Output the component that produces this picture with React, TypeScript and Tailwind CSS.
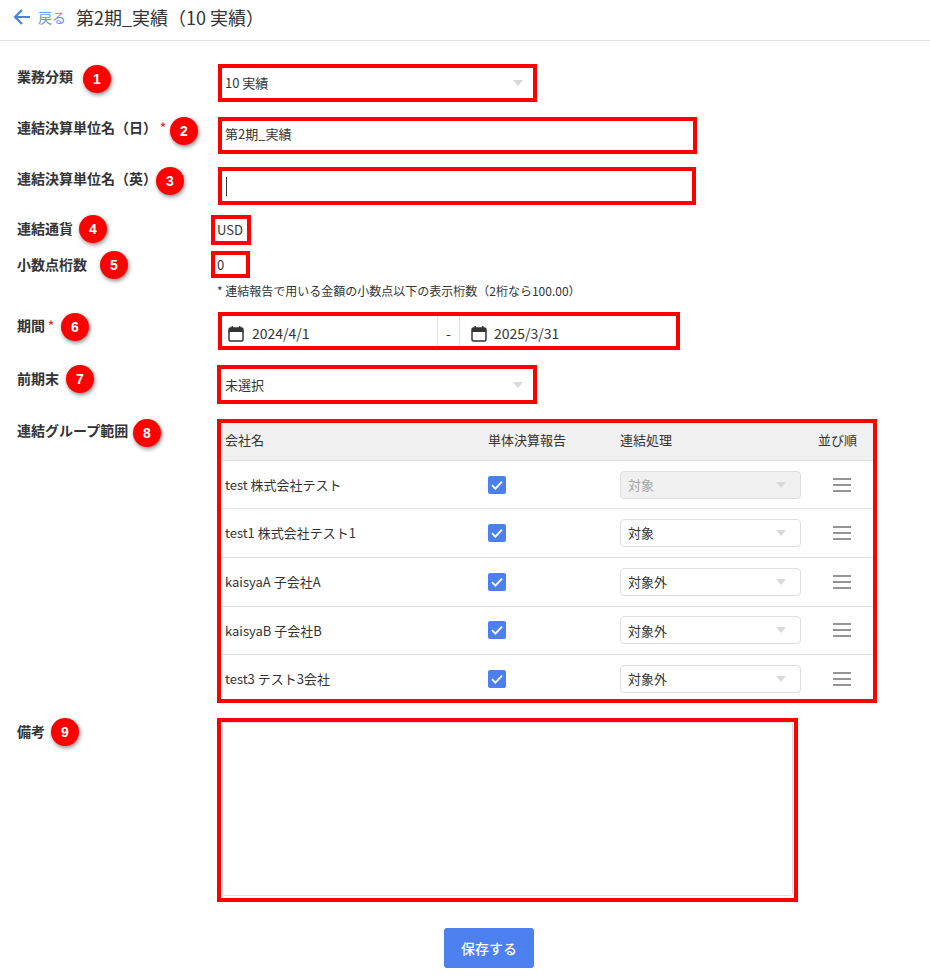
import { ReactNode } from 'react';

const companies = [
  { name: 'test 株式会社テスト', mode: '対象', disabled: true },
  { name: 'test1 株式会社テスト1', mode: '対象', disabled: false },
  { name: 'kaisyaA 子会社A', mode: '対象外', disabled: false },
  { name: 'kaisyaB 子会社B', mode: '対象外', disabled: false },
  { name: 'test3 テスト3会社', mode: '対象外', disabled: false },
];

function Badge({ n, className }: { n: number; className: string }) {
  return (
    <span
      className={`absolute flex h-[28px] w-[28px] items-center justify-center rounded-full bg-[#ff0000] font-['Liberation_Sans',sans-serif] text-[14px] font-bold text-white shadow-[1px_2px_4px_rgba(0,0,0,0.45)] ${className}`}
    >
      {n}
    </span>
  );
}

function Caret() {
  return <span className="h-0 w-0 border-x-[5px] border-t-[6px] border-x-transparent border-t-[#d9d9d9]" />;
}

function CalendarIcon() {
  return (
    <svg width="18" height="18" viewBox="0 0 18 18" className="shrink-0 text-[#333]">
      <path d="M2 4.5a1.5 1.5 0 0 1 1.5-1.5h11A1.5 1.5 0 0 1 16 4.5v10a1.5 1.5 0 0 1-1.5 1.5h-11A1.5 1.5 0 0 1 2 14.5z" fill="none" stroke="currentColor" strokeWidth="1.5" />
      <rect x="2" y="3" width="14" height="4" fill="currentColor" />
      <rect x="4.5" y="1" width="1.6" height="3" fill="currentColor" />
      <rect x="11.9" y="1" width="1.6" height="3" fill="currentColor" />
    </svg>
  );
}

function Row({ label, badge, className, children }: { label: ReactNode; badge: ReactNode; className: string; children: ReactNode }) {
  return (
    <div className={`flex ${className}`}>
      <div className="relative w-[200px] shrink-0 text-[14px] font-bold leading-[20px] text-[#333]">
        {label}
        {badge}
      </div>
      {children}
    </div>
  );
}

function Required() {
  return <span className="ml-[3px] align-top text-[12px] text-[#d9363e]">*</span>;
}

function CompanyRow({ name, mode, disabled }: { name: string; mode: string; disabled: boolean }) {
  return (
    <div className="grid h-[48.6px] grid-cols-[267px_132px_198px_1fr] items-center border-t border-[#e2e2e2]">
      <span className="pl-[4px]">{name}</span>
      <span className="flex h-[18px] w-[18px] items-center justify-center rounded-[2px] bg-[#4c80ee]">
        <svg width="14" height="14" viewBox="0 0 14 14" fill="none" stroke="#fff" strokeWidth="1.8">
          <path d="M2 7.2l3.4 3.4L12 3.6" />
        </svg>
      </span>
      <span
        className={`flex h-[28px] w-[181px] items-center justify-between rounded-[4px] border border-[#dedede] pl-[7px] pr-[14px] ${
          disabled ? 'bg-[#f0f0f0] text-[#a5a5a5]' : 'bg-white'
        }`}
      >
        {mode}
        <Caret />
      </span>
      <span className="flex w-[18px] translate-x-[15px] flex-col gap-[4px]">
        <i className="h-[2px] bg-[#959595]" />
        <i className="h-[2px] bg-[#959595]" />
        <i className="h-[2px] bg-[#959595]" />
      </span>
    </div>
  );
}

export default function App() {
  return (
    <div className="min-h-[977px] bg-white text-[13px] text-[#333] font-['Noto_Sans_CJK_JP','Noto_Sans',sans-serif]">
      {/* Header */}
      <header className="flex h-[41px] items-center border-b border-[#e2e2e2] pb-[6px] pl-[13px]">
        <svg width="18" height="18" viewBox="0 0 18 18" fill="none" stroke="#4c80ee" strokeWidth="2.2">
          <path d="M17 9H2M9 2L2 9l7 7" />
        </svg>
        <span className="ml-[7px] text-[14px] text-[#6d94ea]">戻る</span>
        <h1 className="ml-[10px] text-[18px] font-normal text-[#333]">第2期_実績（10 実績）</h1>
      </header>

      <main className="px-[17px]">
        <Row className="mt-[23px]" label={<span className="relative top-[2px]">業務分類</span>} badge={<Badge n={1} className="left-[66px] top-[1px]" />}>
          <div className="ml-[1px] flex h-[38px] w-[319px] items-center justify-between border-4 border-[#ff0000] pl-[3px] pr-[10px]">
            <span>10 実績</span>
            <Caret />
          </div>
        </Row>

        <Row
          className="mt-[15px]"
          label={<span className="relative">連結決算単位名（日）<Required /></span>}
          badge={<Badge n={2} className="left-[153px] top-0" />}
        >
          <div className="ml-[1px] flex h-[37px] w-[479px] items-center border-4 border-[#ff0000] pb-[4px] pl-[3px]">第2期_実績</div>
        </Row>

        <Row className="mt-[13px]" label={<span className="relative top-[1px]">連結決算単位名（英）</span>} badge={<Badge n={3} className="left-[139px] top-0" />}>
          <div className="ml-[1px] flex h-[38px] w-[478px] items-center border-4 border-[#ff0000] pl-[4px]">
            <span className="h-[19px] w-px bg-[#333]" />
          </div>
        </Row>

        <Row className="mt-[10px]" label={<span className="relative top-[3px]">連結通貨</span>} badge={<Badge n={4} className="left-[62px] top-0" />}>
          <div className="ml-[-6px] flex h-[30px] w-[40px] items-center border-4 border-[#ff0000] pl-[2px] text-[13px]">USD</div>
        </Row>

        <Row className="mt-[6px]" label={<span className="relative top-[3px]">小数点桁数</span>} badge={<Badge n={5} className="left-[83px] top-0" />}>
          <div className="ml-[-6px] flex h-[27px] w-[39px] items-center border-4 border-[#ff0000] pl-[2px] text-[13px]">0</div>
        </Row>

        <p className="ml-[200px] mt-[5px] text-[12px] leading-[16px]">* 連結報告で用いる金額の小数点以下の表示桁数（2桁なら100.00）</p>

        <Row
          className="mt-[13px]"
          label={<span className="relative top-[3px]">期間<Required /></span>}
          badge={<Badge n={6} className="left-[44px] top-[1px]" />}
        >
          <div className="ml-[1px] flex h-[38px] w-[462px] items-center border-4 border-[#ff0000] text-[14px]">
            <div className="flex h-full w-[216px] items-center gap-[7px] border-r border-[#e2e2e2] pl-[5px] pt-[5px]">
              <CalendarIcon />
              2024/4/1
            </div>
            <div className="flex h-full w-[22px] items-center justify-center border-r border-[#e2e2e2] pt-[5px]">-</div>
            <div className="flex h-full items-center gap-[6px] pl-[10px] pt-[5px]">
              <CalendarIcon />
              2025/3/31
            </div>
          </div>
        </Row>

        <Row className="mt-[15px]" label={<span className="relative top-[3px]">前期末</span>} badge={<Badge n={7} className="left-[49px] top-0" />}>
          <div className="flex h-[39px] w-[320px] items-center justify-between border-4 border-[#ff0000] pl-[4px] pr-[10px]">
            <span>未選択</span>
            <Caret />
          </div>
        </Row>

        <Row className="mt-[15px]" label={<span className="relative top-[1px]">連結グループ範囲</span>} badge={<Badge n={8} className="left-[116px] top-0" />}>
          <div className="h-[284px] w-[660px] border-4 border-[#ff0000]">
            <div className="grid h-[36.8px] grid-cols-[267px_132px_198px_1fr] items-center bg-[#f0f0f0] pb-[3px]">
              <span className="pl-[4px]">会社名</span>
              <span>単体決算報告</span>
              <span>連結処理</span>
              <span>並び順</span>
            </div>
            {companies.map((c) => (
              <CompanyRow key={c.name} {...c} />
            ))}
          </div>
        </Row>

        <Row className="mt-[15px]" label={<span className="relative top-[3px]">備考</span>} badge={<Badge n={9} className="left-[34px] top-0" />}>
          <div className="h-[184px] w-[581px] border-4 border-[#ff0000] px-[1px] pb-[2px]">
            <div className="h-full rounded-[3px] border border-[#dedede]" />
          </div>
        </Row>

        <div className="ml-[427px] mt-[26px]">
          <button className="h-[40px] w-[90px] rounded-[3px] bg-[#4c80ee] text-[14px] font-medium text-white">保存する</button>
        </div>
      </main>
    </div>
  );
}
